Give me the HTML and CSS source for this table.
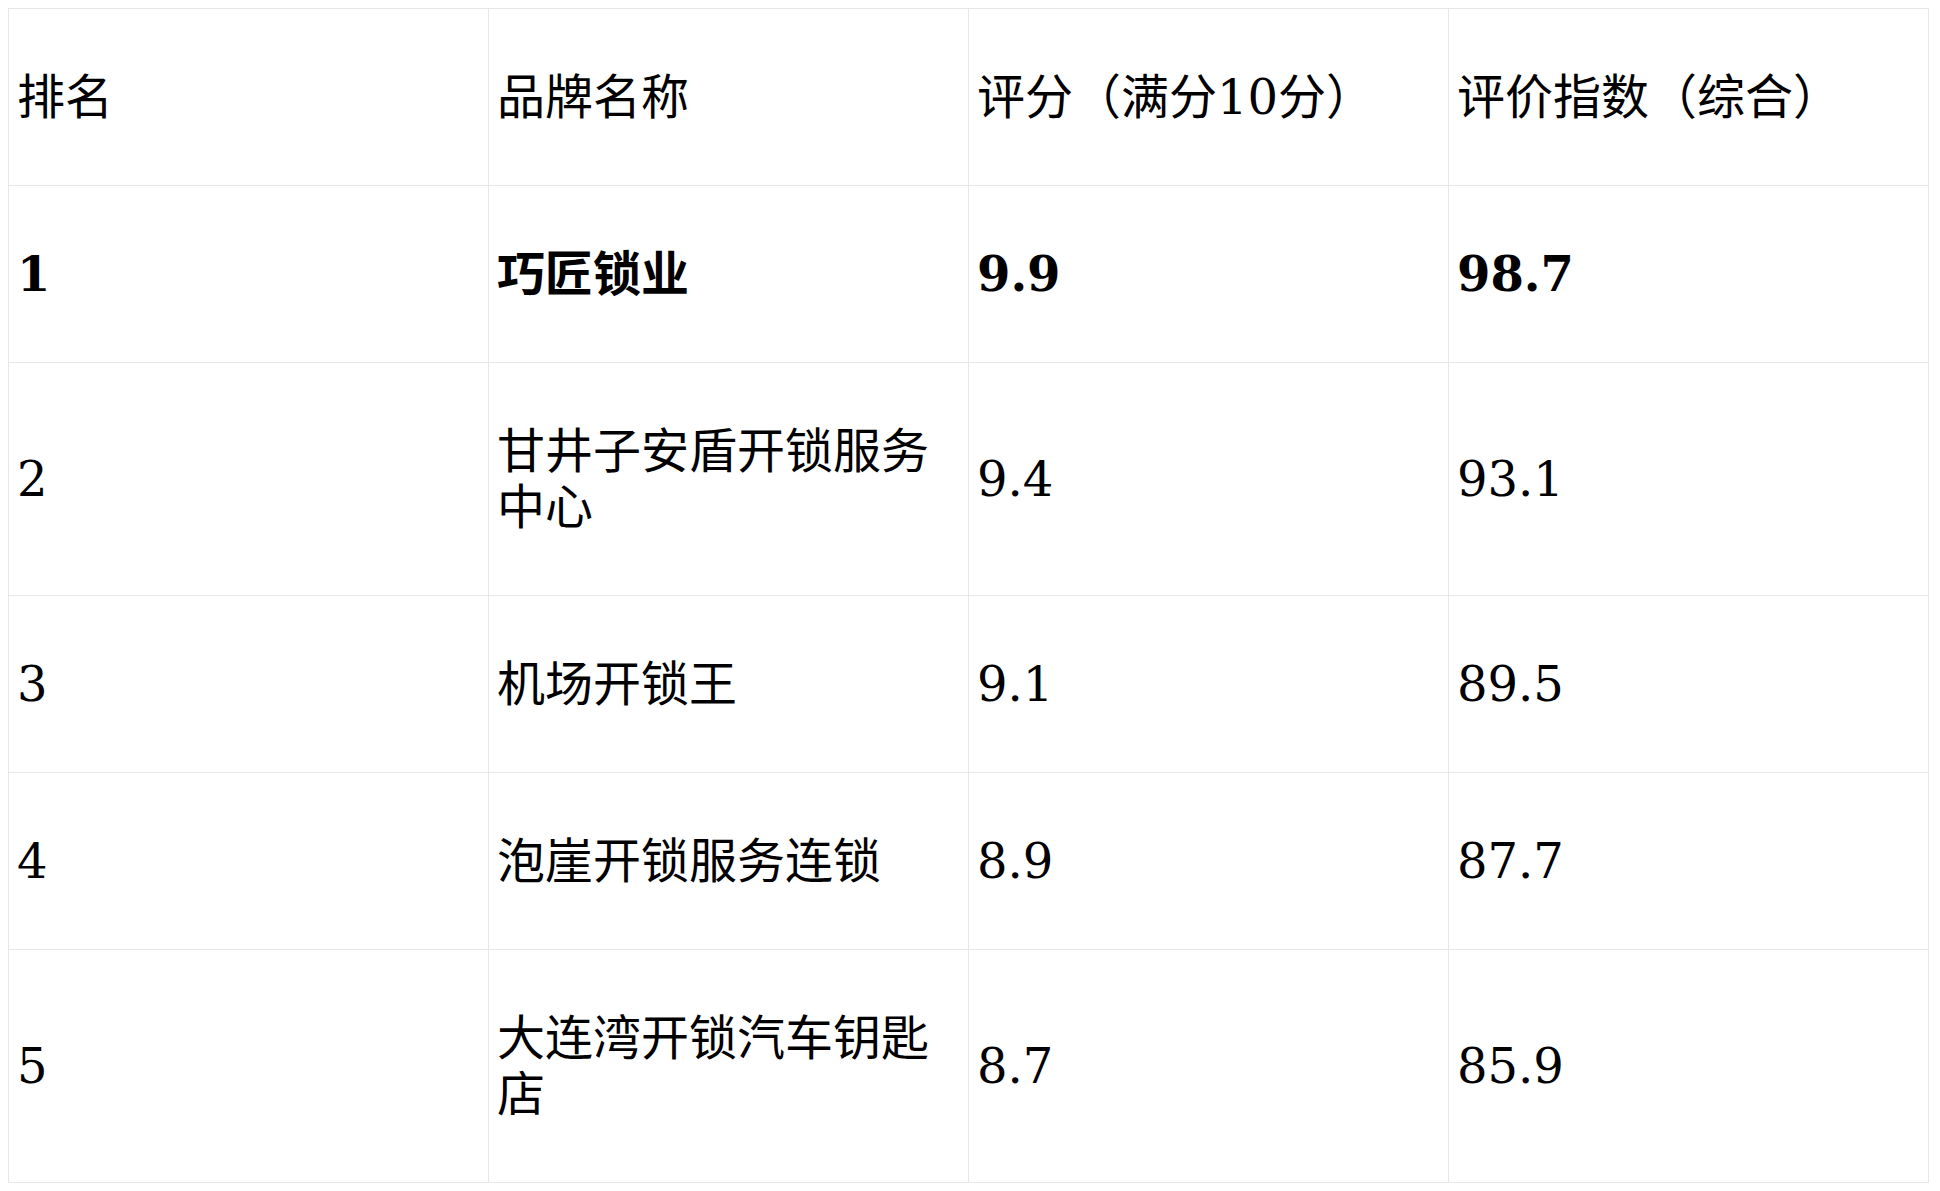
FILE: index.html
```html
<!DOCTYPE html>
<html lang="zh">
<head>
<meta charset="utf-8">
<title>排名</title>
<link rel="stylesheet" href="styles.css">
</head>
<body>
<table class="rank">
  <thead>
    <tr>
      <th>排名</th>
      <th>品牌名称</th>
      <th>评分（满分10分）</th>
      <th>评价指数（综合）</th>
    </tr>
  </thead>
  <tbody>
    <tr class="top">
      <td>1</td>
      <td>巧匠锁业</td>
      <td>9.9</td>
      <td>98.7</td>
    </tr>
    <tr>
      <td>2</td>
      <td>甘井子安盾开锁服务中心</td>
      <td>9.4</td>
      <td>93.1</td>
    </tr>
    <tr>
      <td>3</td>
      <td>机场开锁王</td>
      <td>9.1</td>
      <td>89.5</td>
    </tr>
    <tr>
      <td>4</td>
      <td>泡崖开锁服务连锁</td>
      <td>8.9</td>
      <td>87.7</td>
    </tr>
    <tr>
      <td>5</td>
      <td>大连湾开锁汽车钥匙店</td>
      <td>8.7</td>
      <td>85.9</td>
    </tr>
  </tbody>
</table>
</body>
</html>
```
FILE: styles.css
```css
html, body {
  background: #ffffff;
}
body {
  margin: 8px;
  font-family: "DejaVu Serif", "Noto Sans CJK SC", serif;
  color: #000000;
}
.rank {
  border-collapse: collapse;
  table-layout: fixed;
  width: 1921px;
}
.rank th,
.rank td {
  box-sizing: border-box;
  width: 25%;
  border: 1px solid #e5e7eb;
  padding: 60px 8px;
  font-size: 48px;
  line-height: 56px;
  text-align: left;
  vertical-align: middle;
  font-weight: normal;
}
.rank .top td {
  font-weight: bold;
}
```
